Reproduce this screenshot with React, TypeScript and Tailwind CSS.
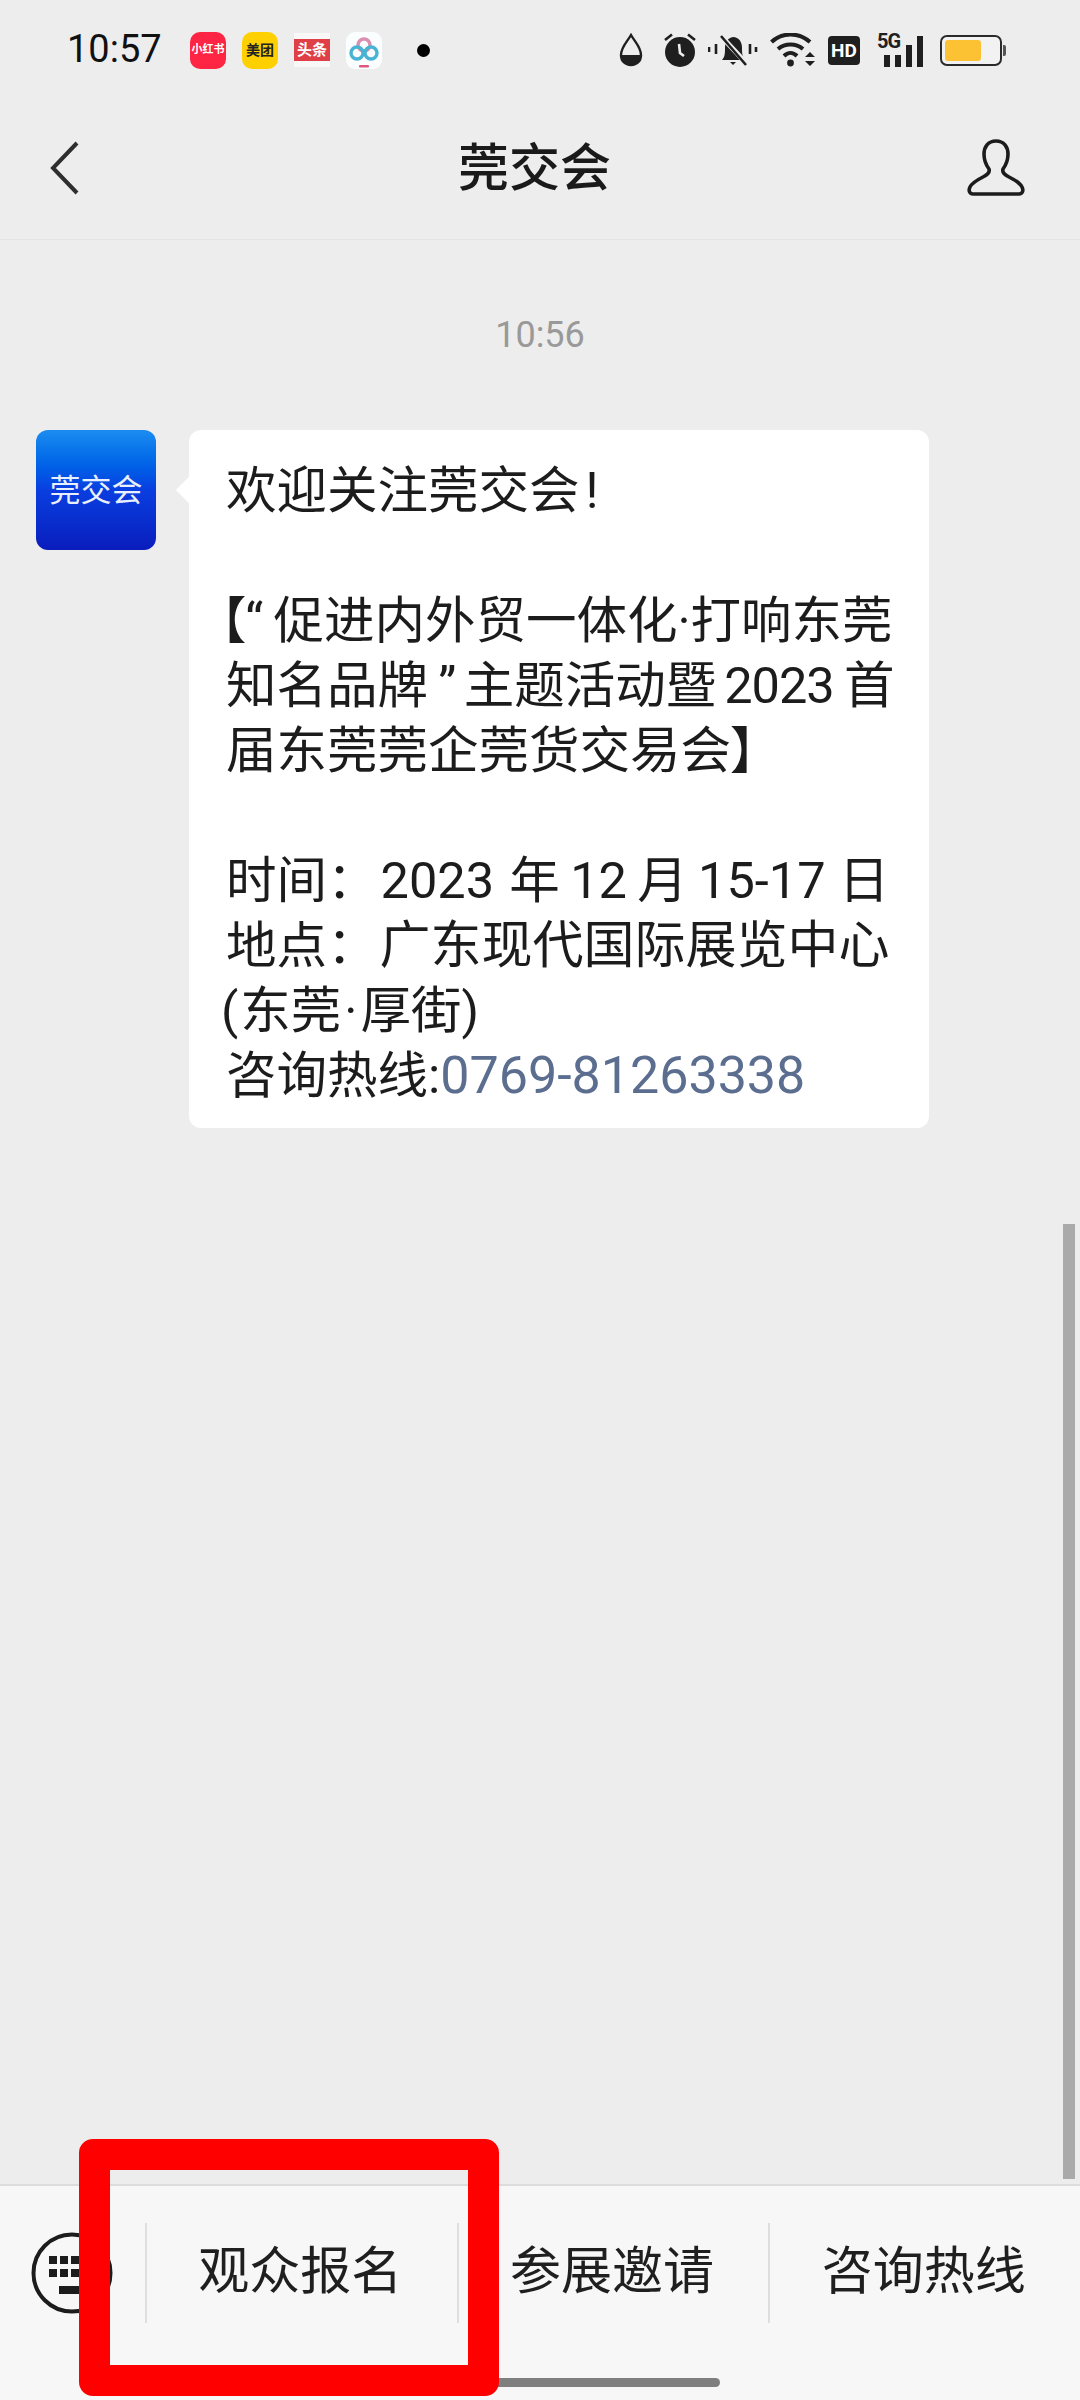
import type { ReactNode } from "react";

function BackIcon() {
  return (
    <svg width="30" height="54" viewBox="0 0 30 54" fill="none" stroke="#2e2e2e" strokeWidth="4">
      <path d="M27 2 L3 27 L27 52" />
    </svg>
  );
}

function PersonIcon() {
  return (
    <svg width="58" height="58" viewBox="0 0 58 58" fill="none" stroke="#1c1c1c" strokeWidth="3.6">
      <path d="M29 2 C21 2 17 8 17 15 C17 22 19 26 22 30 C23 33 20 36 16 38 C10 41 5 44 3 48 C1 52 3 55 6 55 L52 55 C55 55 57 52 55 48 C53 44 48 41 42 38 C38 36 35 33 36 30 C39 26 41 22 41 15 C41 8 37 2 29 2 Z" />
    </svg>
  );
}

function KeyboardIcon() {
  return (
    <svg width="82" height="84" viewBox="0 0 82 84" fill="#1c1c1c">
      <circle cx="41" cy="42" r="38.5" fill="none" stroke="#1c1c1c" strokeWidth="4" />
      <rect x="18" y="25" width="8" height="8" />
      <rect x="29" y="25" width="8" height="8" />
      <rect x="40" y="25" width="8" height="8" />
      <rect x="51" y="25" width="8" height="8" />
      <rect x="18" y="38" width="8" height="8" />
      <rect x="29" y="38" width="8" height="8" />
      <rect x="40" y="38" width="8" height="8" />
      <rect x="51" y="38" width="8" height="8" />
      <rect x="28" y="55" width="26" height="8" />
    </svg>
  );
}

function DropIcon() {
  return (
    <svg width="24" height="34" viewBox="0 0 24 34" fill="none">
      <path d="M12 2 C8 9 2 14 2 22 C2 28 6 32 12 32 C18 32 22 28 22 22 C22 14 16 9 12 2 Z" stroke="#1f1f1f" strokeWidth="2.4" />
      <path d="M2 22 H22 C22 28 18 32 12 32 C6 32 2 28 2 22 Z" fill="#1f1f1f" />
    </svg>
  );
}

function AlarmIcon() {
  return (
    <svg width="32" height="34" viewBox="0 0 32 34" fill="none">
      <circle cx="16" cy="19" r="15" fill="#1f1f1f" />
      <path d="M1 7 L8 1.5 M31 7 L24 1.5" stroke="#1f1f1f" strokeWidth="2.6" />
      <path d="M15 11 L16 20 L20 23" stroke="#ededed" strokeWidth="2.6" />
    </svg>
  );
}

function MuteBellIcon() {
  return (
    <svg width="50" height="34" viewBox="0 0 50 34" fill="none">
      <path d="M14 27 C17 24 17 20 17 15 C17 9 20 5 25 4 C31 4 34 9 34 15 C34 20 34 24 38 27 Z" fill="#1f1f1f" />
      <path d="M22 29 H28 L25 32 Z" fill="#1f1f1f" />
      <path d="M12 2 L39 31" stroke="#ededed" strokeWidth="5" />
      <path d="M13 3 L38 32" stroke="#1f1f1f" strokeWidth="2.6" />
      <path d="M1 14 V19 M8 11 V21 M42 11 V21 M48 14 V19" stroke="#1f1f1f" strokeWidth="2.6" />
    </svg>
  );
}

function WifiIcon() {
  return (
    <svg width="46" height="34" viewBox="0 0 46 34" fill="none" stroke="#1f1f1f" strokeWidth="4">
      <path d="M1.5 9 C12 -1 29 -1 40 9" />
      <path d="M8 16 C15 10 26 10 33 16" />
      <path d="M14 23 C18 19 23 19 27 23" />
      <circle cx="20.5" cy="30" r="3.4" fill="#1f1f1f" stroke="none" />
      <path d="M35 24 L40 19 L45 24 Z M35 28 L45 28 L40 33 Z" fill="#1f1f1f" stroke="none" />
    </svg>
  );
}

function SignalIcon() {
  return (
    <div className="relative w-[46px] h-[34px] flex items-end justify-end gap-[5px]">
      <span className="absolute left-0 top-[-2px] text-[20px] leading-[20px] font-bold text-[#1f1f1f] tracking-[-1px]">5G</span>
      <span className="w-[6px] h-[12px] bg-[#1f1f1f]" />
      <span className="w-[6px] h-[12px] bg-[#1f1f1f]" />
      <span className="w-[6px] h-[22px] bg-[#1f1f1f]" />
      <span className="w-[6px] h-[31px] bg-[#1f1f1f]" />
    </div>
  );
}

function BatteryIcon() {
  return (
    <div className="flex items-center gap-[1px]">
      <div className="w-[62px] h-[31px] rounded-[7px] border-[2px] border-[#2a2a2a] p-[3px] bg-[#f2f2f2]">
        <div className="w-[36px] h-full rounded-[3px] bg-[#fcc233]" />
      </div>
      <div className="w-[3px] h-[11px] rounded-r-[2px] bg-[#555]" />
    </div>
  );
}

function LinkedCirclesIcon() {
  return (
    <svg width="36" height="37" viewBox="0 0 36 37" fill="none">
      <rect width="36" height="37" rx="9" fill="#fbfefe" />
      <circle cx="18" cy="13" r="6" stroke="#d88fb0" strokeWidth="3.4" />
      <circle cx="11" cy="21" r="6" stroke="#49b3d4" strokeWidth="3.4" />
      <circle cx="25" cy="21" r="6" stroke="#49b3d4" strokeWidth="3.4" />
      <rect x="13" y="33" width="10" height="2.4" rx="1" fill="#e0567f" />
    </svg>
  );
}

function Line({ children }: { children?: ReactNode }) {
  return <div className="h-[65px] leading-[65px] whitespace-nowrap">{children}</div>;
}

function MenuItem({ label }: { label: string }) {
  return (
    <div className="flex-1 h-[100px] pb-[3px] pr-[3px] flex items-center justify-center border-l-2 border-[#dedede] text-[51px] leading-[60px] text-[#1f1f1f]">
      {label}
    </div>
  );
}

export default function App() {
  return (
    <div
      lang="zh-CN"
      className="relative w-[1080px] h-[2400px] overflow-hidden flex flex-col bg-[#ededed] [font-family:Roboto,'Noto_Sans_CJK_SC',sans-serif]"
    >
      {/* status bar */}
      <div className="h-[100px] flex items-center pl-[67px] pr-[74px]">
        <span className="w-[123px] pb-[2px] text-[38px] leading-[44px] text-[#111]">10:57</span>
        <div className="flex items-center gap-[16px]">
          <div className="w-[36px] h-[37px] rounded-[10px] bg-[#fe2443] flex items-center justify-center text-[11px] font-bold text-white whitespace-nowrap">小红书</div>
          <div className="w-[36px] h-[37px] rounded-[10px] bg-[#ffd000] flex items-center justify-center text-[14px] font-bold leading-none text-[#222] whitespace-nowrap">美团</div>
          <div className="w-[36px] h-[34px] bg-[#f8f8f8] flex items-center">
            <div className="w-full h-[22px] bg-[#df3f47] flex items-center justify-center text-[15px] font-bold leading-none text-white whitespace-nowrap">头条</div>
          </div>
          <LinkedCirclesIcon />
        </div>
        <span className="ml-[35px] w-[13px] h-[13px] rounded-full bg-black" />
        <div className="ml-auto flex items-center gap-[12px]">
          <div className="mr-[9px]"><DropIcon /></div>
          <AlarmIcon />
          <MuteBellIcon />
          <WifiIcon />
          <div className="w-[32px] h-[29px] rounded-[4px] bg-[#1f1f1f] flex items-center justify-center text-[19px] font-bold leading-none text-white">HD</div>
          <div className="ml-[5px]"><SignalIcon /></div>
          <div className="ml-[5px]"><BatteryIcon /></div>
        </div>
      </div>

      {/* nav */}
      <div className="relative h-[140px] pb-[3px] flex items-center justify-between pl-[50px] pr-[55px] border-b border-[#e4e4e4]">
        <BackIcon />
        <span className="ml-[22px] pt-[2px] text-[51px] leading-[60px] font-medium text-[#1a1a1a]">莞交会</span>
        <PersonIcon />
      </div>

      {/* chat */}
      <div className="flex-1 px-[36px]">
        <div className="pt-[73px] text-center text-[36px] leading-[44px] text-[#999999]">10:56</div>
        <div className="mt-[73px] flex items-start gap-[33px]">
          <div className="w-[120px] h-[120px] pt-[2px] shrink-0 rounded-[12px] bg-gradient-to-b from-[#1c8cf0] via-[#0a3ee0] to-[#0a1cbc] flex items-center justify-center text-[31px] text-[#e8efff]">
            莞交会
          </div>
          <div className="relative w-[740px] h-[698px] rounded-[12px] bg-white pl-[37px] pt-[28px] text-[50.5px] text-[#1c1c1c]">
            <span className="absolute left-[-9px] top-[50px] w-[20px] h-[20px] rotate-45 bg-white" />
            <Line>欢迎关注莞交会<span className="ml-[6px]">!</span></Line>
            <Line />
            <Line><span className="-ml-[6px] [font-feature-settings:'palt']">【</span>“{"\u2009"}促进内外贸一体化·打响东莞</Line>
            <Line>知名品牌{"\u2009"}<span className="-mr-[3px]">”</span>{"\u2009"}主题活动暨<span className="ml-[8px] tracking-[-1px]">2023</span>{"\u2009"}首</Line>
            <Line><span className="[font-feature-settings:'palt']">届东莞莞企莞货交易会】</span></Line>
            <Line />
            <Line>时间：<span className="ml-[3px]">2023</span><span className="ml-[5px]">{"\u2009"}年{"\u2009"}12{"\u2009"}月{"\u2009"}15-17{"\u2009"}</span><span className="ml-[3px]">日</span></Line>
            <Line>地点：<span className="ml-[2px] text-[51px]">广东现代国际展览中心</span></Line>
            <Line><span className="-ml-[5px] mr-[2px]">(</span>东莞<span className="mx-[3px]">·</span>厚街)</Line>
            <Line>咨询热线:<span className="text-[52px] text-[#5c6e8f]">0769-81263338</span></Line>
          </div>
        </div>
      </div>

      {/* bottom menu */}
      <div className="h-[216px] border-t-2 border-[#dcdcdc] bg-[#f7f7f7] pt-[37px] flex items-start">
        <div className="w-[145px] h-[100px] pl-[31px] pt-[8px]">
          <KeyboardIcon />
        </div>
        <MenuItem label="观众报名" />
        <MenuItem label="参展邀请" />
        <MenuItem label="咨询热线" />
      </div>

      {/* scrollbar, home bar and annotation sit over the page */}
      <div className="absolute left-[1063px] top-[1224px] w-[12px] h-[955px] bg-[#aaaaaa]" />
      <div className="absolute left-[360px] top-[2378px] w-[360px] h-[9px] rounded-full bg-[#7f7f7f]" />
      <div className="absolute left-[79px] top-[2139px] w-[420px] h-[257px] rounded-[14px] border-[31px] border-[#ff0000]" />
    </div>
  );
}
